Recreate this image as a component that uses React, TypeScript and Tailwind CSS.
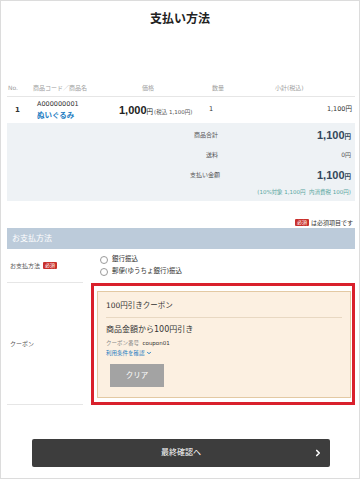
import { ChevronRight, ChevronDown } from 'lucide-react';

const font = { fontFamily: '"DejaVu Sans","Noto Sans CJK JP",sans-serif' };
const num = { fontFamily: '"Liberation Sans","Noto Sans CJK JP",sans-serif' };

function Badge() {
    return (
        <span className="inline-flex items-center justify-center bg-[#c9302c] text-white text-[5px] leading-none h-[7px] px-[2px] rounded-[1px]">
            必須
        </span>
    );
}

function Radio({ label }: { label: string }) {
    return (
        <label className="flex items-center gap-[4px] h-[12px]">
            <span className="w-[8px] h-[8px] rounded-full border border-[#9a9a9a] bg-white" />
            <span className="text-[6.5px] text-[#333]">{label}</span>
        </label>
    );
}

export default function App() {
    return (
        <div style={font} className="w-[360px] h-[479px] border border-[#dcdcdc] bg-white overflow-hidden text-[#333]">
            <h1 className="h-[36px] flex items-center justify-center text-[12px] font-bold text-[#222]">支払い方法</h1>

            <div className="pl-[6px] pr-[4px] mt-[42px]">
                {/* table header */}
                <div className="grid grid-cols-[26px_86px_86px_50px_1fr] h-[18px] items-center border-b border-[#e6e6e6] text-[6px] text-[#a0a0a0]">
                    <span className="pl-[1px]">No.</span>
                    <span>商品コード／商品名</span>
                    <span className="pl-[23px]">価格</span>
                    <span className="pl-[7px]">数量</span>
                    <span className="pl-[20px]">小計(税込)</span>
                </div>

                {/* item row */}
                <div className="grid grid-cols-[26px_86px_86px_50px_1fr] items-center py-[2px] h-[26px]">
                    <span className="pl-[8px] text-[7px] font-bold">1</span>
                    <div className="pl-[4px] flex flex-col">
                        <span className="text-[6.5px] leading-[11px]">A000000001</span>
                        <span className="text-[7.5px] leading-[11px] font-bold text-[#1f7dc2]">ぬいぐるみ</span>
                    </div>
                    <div className="flex items-baseline whitespace-nowrap">
                        <span style={num} className="text-[11px] font-bold text-[#222]">1,000</span>
                        <span className="text-[6.5px] text-[#222]">円</span>
                        <span className="text-[5.5px] text-[#555] ml-[1px]">(税込 1,100円)</span>
                    </div>
                    <span className="pl-[4px] text-[6.5px]">1</span>
                    <span className="text-right pr-[3px] text-[6.5px]">1,100円</span>
                </div>

                {/* summary */}
                <div className="bg-[#eef2f5] pt-[1px] pb-[1px]">
                    <div className="flex items-center h-[20px]">
                        <span className="w-[211px] text-right text-[6px] text-[#555]">商品合計</span>
                        <span className="flex-1 text-right pr-[4px] text-[#34475b]">
                            <span style={num} className="text-[11px] font-bold">1,100</span>
                            <span className="text-[6.5px] font-bold">円</span>
                        </span>
                    </div>
                    <div className="flex items-center h-[20px]">
                        <span className="w-[211px] text-right text-[6px] text-[#555]">送料</span>
                        <span className="flex-1 text-right pr-[4px] text-[6px] text-[#555]">0円</span>
                    </div>
                    <div className="flex items-center h-[20px]">
                        <span className="w-[213px] text-right text-[6px] text-[#555]">支払い金額</span>
                        <span className="flex-1 text-right pr-[4px] text-[#34475b]">
                            <span style={num} className="text-[11px] font-bold">1,100</span>
                            <span className="text-[6.5px] font-bold">円</span>
                        </span>
                    </div>
                    <div className="h-[16px] flex items-center justify-end pr-[4px] text-[5.5px] text-[#5aa69f]">
                        (10%対象 1,100円&nbsp;&nbsp;内消費税 100円)
                    </div>
                </div>

                {/* required note */}
                <div className="mt-[15px] h-[12px] flex items-center justify-end gap-[2px] pr-[2px] text-[6px]">
                    <Badge />
                    <span>は必須項目です</span>
                </div>

                {/* section header */}
                <div className="h-[21px] bg-[#bccbda] flex items-center pl-[5px] text-[8px] text-white">お支払方法</div>

                {/* payment method row */}
                <div className="flex">
                    <div className="w-[76px] border-b border-[#e6e6e6] flex items-center gap-[3px] pl-[3px] h-[34px]">
                        <span className="text-[6px] text-[#555]">お支払方法</span>
                        <Badge />
                    </div>
                    <div className="flex-1 pl-[17px] pt-[5px] pb-[5px]">
                        <Radio label="銀行振込" />
                        <Radio label="郵便(ゆうちょ銀行)振込" />
                    </div>
                </div>

                {/* coupon row */}
                <div className="flex">
                    <div className="w-[76px] border-b border-[#e6e6e6] flex items-center pl-[3px] text-[6px] text-[#555]">
                        クーポン
                    </div>
                    <div className="ml-[8px] flex-1 border-[3px] border-[#d9202c] pl-[3px] pt-[5px] pr-[1px] pb-[4px]">
                        <div className="border border-[#e3c9a3] bg-[#fcf0e1] px-[8px] pt-[8px] pb-[10px]">
                            <p className="text-[7.5px] leading-[12px] text-[#333]">100円引きクーポン</p>
                            <div className="mt-[5px] border-t border-[#e8d8c2]" />
                            <p className="mt-[5px] text-[8px] leading-[13px] text-[#333]">商品金額から100円引き</p>
                            <p className="mt-[2px] text-[5.5px] leading-[10px] text-[#888]">
                                クーポン番号&nbsp;&nbsp;<span className="text-[#333]">coupon01</span>
                            </p>
                            <p className="text-[5.5px] leading-[10px] text-[#1f7dc2] flex items-center gap-[1px]">
                                利用条件を確認
                                <ChevronDown size={6} strokeWidth={4} />
                            </p>
                            <button className="mt-[6px] ml-[4px] w-[54px] h-[23px] bg-[#a3a3a3] text-white text-[7.5px]">クリア</button>
                        </div>
                    </div>
                </div>
            </div>

            {/* final button */}
            <div className="mt-[34px] px-[31px]">
                <button className="relative w-[298px] h-[28px] bg-[#3d3d3d] rounded-[2px] text-white text-[8px] flex items-center justify-center">
                    最終確認へ
                    <ChevronRight className="absolute right-[7px]" size={10} strokeWidth={4} />
                </button>
            </div>
        </div>
    );
}
